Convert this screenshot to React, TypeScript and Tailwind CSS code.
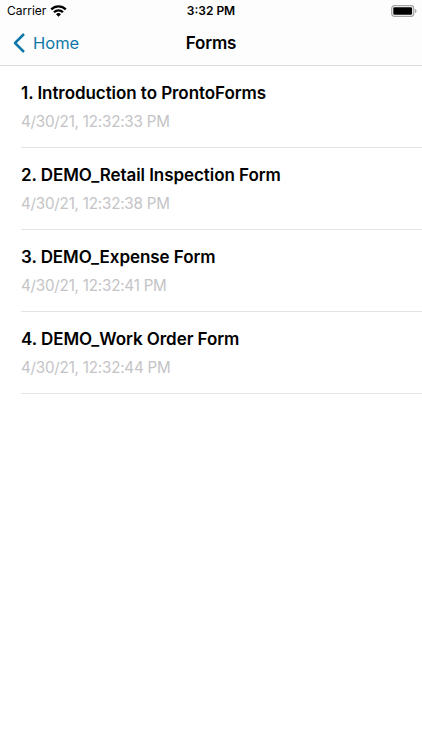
const FORMS = [
  { title: "Introduction to ProntoForms", date: "4/30/21, 12:32:33 PM" },
  { title: "DEMO_Retail Inspection Form", date: "4/30/21, 12:32:38 PM" },
  { title: "DEMO_Expense Form", date: "4/30/21, 12:32:41 PM" },
  { title: "DEMO_Work Order Form", date: "4/30/21, 12:32:44 PM" },
];

export default function App() {
  return (
    <div className="flex h-[750px] w-full flex-col overflow-hidden bg-white font-['Inter',sans-serif] text-black">
      <header className="h-[66px] shrink-0 border-b border-[#dcdcdc] bg-[#fdfdfd]">
        <StatusBar />
        <nav className="grid h-[43px] grid-cols-3 items-center">
          <button className="flex items-center gap-2 pl-[13px] text-left text-[#0f78a8]">
            <svg className="mb-px" width="12" height="20" viewBox="0 0 12 20" fill="none">
              <path d="M11 1 2 10l9 9" stroke="currentColor" strokeWidth="2.5" strokeLinejoin="round" />
            </svg>
            <span className="text-[16.5px]">Home</span>
          </button>
          <h1 className="text-center text-[17px] font-semibold tracking-[-0.15px]">Forms</h1>
        </nav>
      </header>

      <ul className="pl-[21px]">
        {FORMS.map((form, i) => (
          <li key={form.title} className="h-[82px] border-b border-[#e4e4e4] pt-[15px]">
            <h2 className="text-[17px] leading-6 font-semibold tracking-[-0.06px]">
              {i + 1}. {form.title}
            </h2>
            <p className="mt-1.5 text-[15.2px] leading-[21px] tracking-[-0.22px] text-[#c4c4c6]">{form.date}</p>
          </li>
        ))}
      </ul>
    </div>
  );
}

function StatusBar() {
  return (
    <div className="grid h-[22px] grid-cols-3 items-center">
      <div className="flex items-center gap-1 pl-[7px] text-[12px]">
        <span>Carrier</span>
        <svg className="mb-px" width="17" height="12" viewBox="0 0 17 12" fill="currentColor">
          <path d="M8.5 11.8 11 9.3a3.6 3.6 0 0 0-5 0Z" />
          <path d="M4 7.2a6.4 6.4 0 0 1 9 0M1.2 4.4a10.3 10.3 0 0 1 14.6 0" fill="none" stroke="currentColor" strokeWidth="2.3" />
        </svg>
      </div>
      <span className="text-center text-[12px] font-semibold">3:32 PM</span>
      <div className="flex justify-end pr-[5px]">
        <svg width="26" height="12" viewBox="0 0 26 12">
          <rect x="0.7" y="0.6" width="22" height="10.8" rx="3" fill="none" stroke="#a6a6a6" strokeWidth="1.3" />
          <rect x="2.3" y="2.2" width="18.8" height="7.6" rx="1.4" />
          <path d="M24 4v4c1-.4 1.5-1.1 1.5-2S25 4.4 24 4Z" fill="#a6a6a6" />
        </svg>
      </div>
    </div>
  );
}
